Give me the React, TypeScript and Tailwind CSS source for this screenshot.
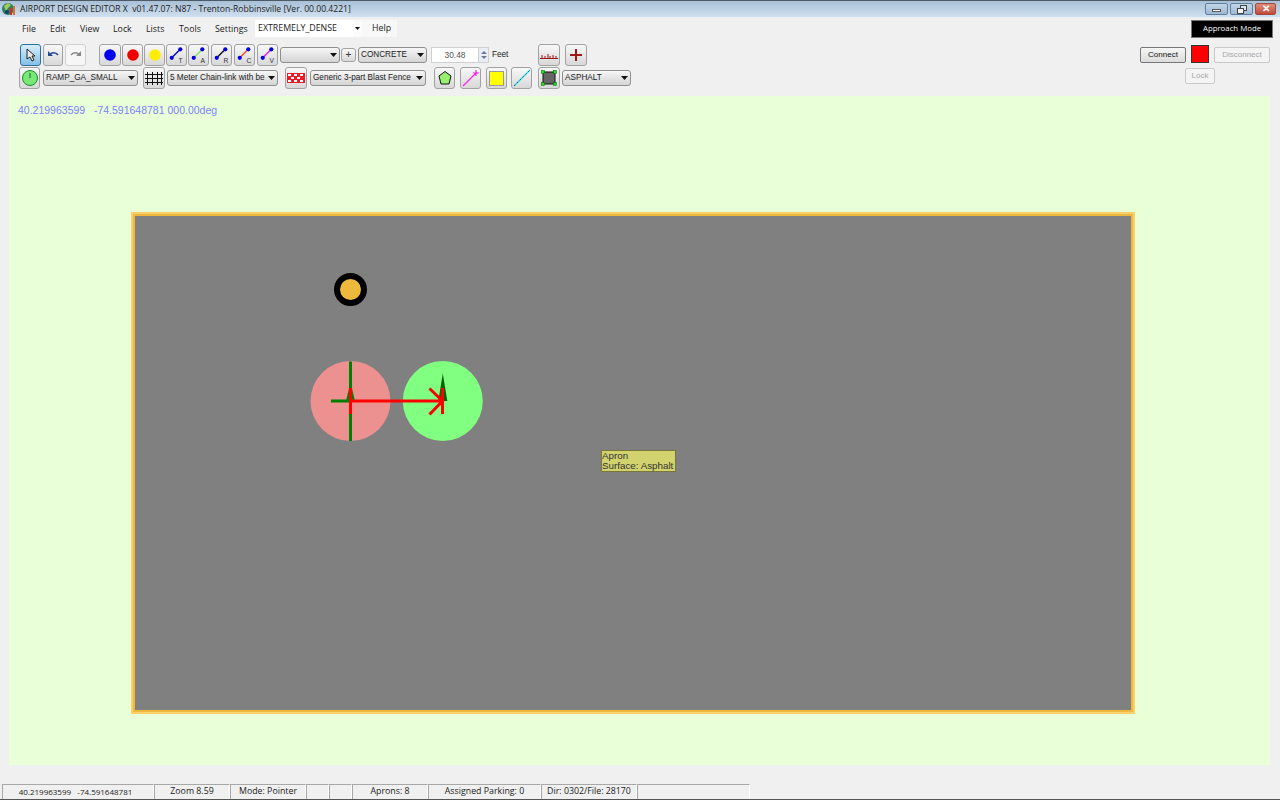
import type { ReactNode } from 'react';

// Shared chrome for the little toolbar buttons
const btn = 'flex shrink-0 items-center justify-center rounded-[3px] border';
const btnNormal = 'border-[#a2a2a2] bg-linear-to-b from-[#f8f8f8] to-[#d8d8d8]';

function ToolButton({
  className,
  tone = btnNormal,
  children,
}: {
  className: string;
  tone?: string;
  children: ReactNode;
}) {
  return <div className={`${btn} ${tone} ${className}`}>{children}</div>;
}

function Combo({ className, label }: { className: string; label?: string }) {
  return (
    <div
      className={`flex shrink-0 items-center justify-between rounded-[3px] border border-[#8f8f8f] bg-linear-to-b from-[#f6f6f6] to-[#d4d4d4] pl-[2px] pr-[2px] text-[8.2px] text-[#222] ${className}`}
    >
      <span className="whitespace-nowrap">{label}</span>
      <svg width="7" height="4" viewBox="0 0 7 4" className="shrink-0">
        <path d="M0 0h7L3.5 4z" fill="#111" />
      </svg>
    </div>
  );
}

function Dot({ color }: { color: string }) {
  return (
    <svg width="16" height="16" viewBox="0 0 16 16">
      <circle cx="8" cy="8" r="5.8" fill={color} />
    </svg>
  );
}

function LineTool({ color, letter }: { color: string; letter: string }) {
  return (
    <svg width="20" height="20" viewBox="0 0 20 20">
      <line x1="5" y1="13" x2="14" y2="4" stroke={color} strokeWidth="1.5" />
      <circle cx="5" cy="13" r="2.2" fill="#0000e0" />
      <circle cx="14" cy="4" r="2.2" fill="#0000e0" />
      <text x="12" y="18" fontSize="7" fill="#333" fontFamily="Liberation Sans, sans-serif">
        {letter}
      </text>
    </svg>
  );
}

const lineTools = [
  { letter: 'T', color: '#0000e0', className: 'ml-[1px]' },
  { letter: 'A', color: '#80e060', className: 'ml-[1px]' },
  { letter: 'R', color: '#111111', className: 'ml-[2px]' },
  { letter: 'C', color: '#f05020', className: 'ml-[2px]' },
  { letter: 'V', color: '#e020e0', className: 'ml-[2px]' },
];

const menuItems = [
  { label: 'File', className: 'w-[28px]' },
  { label: 'Edit', className: 'w-[30px]' },
  { label: 'View', className: 'w-[33px]' },
  { label: 'Lock', className: 'w-[33px]' },
  { label: 'Lists', className: 'w-[33px]' },
  { label: 'Tools', className: 'w-[36px]' },
  { label: 'Settings', className: 'w-[40px]' },
];

const statusPanels = [
  { label: '40.219963599   -74.591648781', className: 'w-[152px] pr-[5px] text-[8px]' },
  { label: 'Zoom 8.59', className: 'w-[76px] text-[8.8px]' },
  { label: 'Mode: Pointer', className: 'w-[76px] text-[8.8px]' },
  { label: '', className: 'w-[23px]' },
  { label: '', className: 'w-[23px]' },
  { label: 'Aprons: 8', className: 'w-[76px] text-[8.8px]' },
  { label: 'Assigned Parking: 0', className: 'w-[113px] text-[8.8px]' },
  { label: 'Dir: 0302/File: 28170', className: 'w-[96px] text-[8.8px]' },
  { label: '', className: 'w-[113px]' },
];

function WindowButton({ className, children }: { className: string; children: ReactNode }) {
  return (
    <div className={`flex h-[12px] items-center justify-center rounded-[2px] border ${className}`}>
      {children}
    </div>
  );
}

export default function App() {
  return (
    <div className="flex h-[800px] w-[1280px] flex-col overflow-hidden bg-[#f0f0f0] font-['Liberation_Sans',sans-serif]">
      {/* Title bar */}
      <div className="flex h-[17px] shrink-0 items-center border-t border-[#4c5a66] bg-linear-to-b from-[#a9c0d6] to-[#cfe0f0]">
        <svg width="16" height="16" viewBox="0 0 16 16" className="ml-[1px] shrink-0">
          <circle cx="7" cy="8" r="6" fill="#2f7f6a" />
          <path d="M3 5l4-3 3 2-3 3-2 3z" fill="#9fd05a" />
          <rect x="9" y="7" width="2" height="7" fill="#d83020" />
          <rect x="12" y="5" width="2" height="9" fill="#e07020" />
          <circle cx="6" cy="11" r="2" fill="#1a3f66" />
        </svg>
        <span className="ml-[3px] whitespace-pre font-['Open_Sans',sans-serif] text-[8.6px] text-[#222]">
          AIRPORT DESIGN EDITOR X  v01.47.07: N87 - Trenton-Robbinsville [Ver. 00.00.4221]
        </span>
        <div className="ml-auto mr-[4px] flex gap-[2px]">
          <WindowButton className="w-[23px] border-[#5f7f9f] bg-linear-to-b from-[#c4d6e8] to-[#9fb8d0]">
            <div className="mt-[2px] h-[3px] w-[9px] border border-[#555] bg-white" />
          </WindowButton>
          <WindowButton className="w-[23px] border-[#5f7f9f] bg-linear-to-b from-[#c4d6e8] to-[#9fb8d0]">
            <svg width="10" height="9" viewBox="0 0 10 9">
              <rect x="3.5" y="0.5" width="6" height="5" fill="#d8e4f0" stroke="#444" />
              <rect x="0.5" y="3.5" width="6" height="5" fill="#eef4fa" stroke="#444" />
            </svg>
          </WindowButton>
          <WindowButton className="w-[21px] border-[#a04a3a] bg-linear-to-b from-[#e08d7c] to-[#c0493a]">
            <span className="text-[10px] font-bold leading-none text-white">✕</span>
          </WindowButton>
        </div>
      </div>

      {/* Menu strip */}
      <div className="flex h-[23px] shrink-0 items-start pl-[22px] font-['Open_Sans',sans-serif] text-[8.8px] text-[#1a1a1a]">
        {menuItems.map((item) => (
          <span key={item.label} className={`mt-[6px] ${item.className}`}>
            {item.label}
          </span>
        ))}
        <div className="mt-[3px] flex h-[17px] w-[107px] items-center bg-[#fbfbfb]">
          <div className="flex h-full w-[98px] items-center bg-white pl-[3px]">EXTREMELY_DENSE</div>
          <svg width="5" height="3" viewBox="0 0 5 3" className="ml-[2px]">
            <path d="M0 0h5L2.5 3z" fill="#111" />
          </svg>
        </div>
        <div className="mt-[3px] flex h-[17px] w-[35px] items-center bg-[#f8f8f8] pl-[10px]">Help</div>
        <div className="ml-auto mr-[7px] mt-[3px] flex h-[18px] w-[82px] items-center justify-center border border-[#777] bg-black text-[7.8px] text-white">
          Approach Mode
        </div>
      </div>

      {/* Toolbars */}
      <div className="mt-[4px] flex h-[46px] shrink-0 items-start">
        <div className="flex w-[640px] flex-col">
          <div className="flex h-[23px] items-start pl-[20px]">
            <ToolButton
              className="h-[22px] w-[21px]"
              tone="border-[#2c6f9f] bg-linear-to-b from-[#d8eefc] to-[#84bfe6]"
            >
              <svg width="12" height="14" viewBox="0 0 12 14">
                <path d="M2 1v10l3-2 2 4 2-1-2-4h3z" fill="#e8e8e8" stroke="#222" />
              </svg>
            </ToolButton>
            <ToolButton className="ml-[2px] h-[22px] w-[20px]">
              <svg width="12" height="10" viewBox="0 0 12 10" fill="none">
                <path d="M3 5c1-3 6-3 8 0" stroke="#2a4a9a" strokeWidth="1.6" />
                <path d="M1 1v5h5z" fill="#2a4a9a" />
              </svg>
            </ToolButton>
            <ToolButton className="ml-[2px] h-[22px] w-[21px]" tone="border-[#d0d0d0] bg-[#f6f6f6]">
              <svg width="12" height="10" viewBox="0 0 12 10" fill="none">
                <path d="M9 5c-1-3-6-3-8 0" stroke="#888" strokeWidth="1.4" />
                <path d="M11 1v5h-5z" fill="#888" />
              </svg>
            </ToolButton>
            <ToolButton className="ml-[13px] h-[22px] w-[22px]">
              <Dot color="#0000f0" />
            </ToolButton>
            <ToolButton className="ml-[1px] h-[22px] w-[21px]">
              <Dot color="#f00000" />
            </ToolButton>
            <ToolButton className="ml-[1px] h-[22px] w-[21px]">
              <Dot color="#ffee00" />
            </ToolButton>
            {lineTools.map((tool) => (
              <ToolButton key={tool.letter} className={`h-[22px] w-[21px] ${tool.className}`}>
                <LineTool color={tool.color} letter={tool.letter} />
              </ToolButton>
            ))}
            <Combo className="ml-[2px] mt-[3px] h-[16px] w-[60px]" />
            <ToolButton className="ml-[1px] mt-[4px] h-[14px] w-[15px] text-[10px] leading-none text-[#333]">
              +
            </ToolButton>
            <Combo className="ml-[2px] mt-[3px] h-[16px] w-[69px]" label="CONCRETE" />
            <div className="ml-[4px] mt-[3px] flex h-[16px] w-[58px] items-center border border-[#d0d0d0] bg-white text-[8.4px] text-[#555]">
              <span className="w-[46px] text-center">30.48</span>
              <div className="flex h-full w-[10px] flex-col items-center justify-center gap-[2px] border-l border-[#ccc] bg-[#e8eef4]">
                <svg width="6" height="3" viewBox="0 0 6 3">
                  <path d="M0 3h6L3 0z" fill="#6a7a9a" />
                </svg>
                <svg width="6" height="3" viewBox="0 0 6 3">
                  <path d="M0 0h6L3 3z" fill="#6a7a9a" />
                </svg>
              </div>
            </div>
            <span className="ml-[3px] mt-[5px] w-[16px] text-[8.2px] text-[#222]">Feet</span>
            <ToolButton className="ml-[30px] h-[22px] w-[22px]">
              <svg width="18" height="10" viewBox="0 0 18 10" stroke="#a01818" strokeWidth="1" fill="none">
                <path d="M0 8.5h18M2 8V5M5 8V6M8 8V4M10 8V6M13 8V5M16 8V6" />
              </svg>
            </ToolButton>
            <ToolButton className="ml-[5px] h-[22px] w-[22px]">
              <svg width="14" height="14" viewBox="0 0 14 14" stroke="#a01818" strokeWidth="2">
                <path d="M7 1v12M1 7h12" />
              </svg>
            </ToolButton>
          </div>

          <div className="flex h-[23px] items-start pl-[19px]">
            <ToolButton className="h-[22px] w-[21px]">
              <svg width="18" height="18" viewBox="0 0 18 18">
                <circle cx="9" cy="9" r="7.5" fill="#78e878" stroke="#1e8a2a" />
                <path d="M9 4v5" stroke="#116622" strokeWidth="1" />
              </svg>
            </ToolButton>
            <Combo className="ml-[3px] mt-[3px] h-[16px] w-[95px]" label="RAMP_GA_SMALL" />
            <ToolButton className="ml-[5px] h-[22px] w-[22px]">
              <svg width="18" height="13" viewBox="0 0 18 13" stroke="#111" strokeWidth="1" fill="none">
                <path d="M0 2.5h18M0 6.5h18M0 10.5h18M2.5 0v13M7.5 0v13M12.5 0v13M16.5 0v13" />
              </svg>
            </ToolButton>
            <Combo className="ml-[2px] mt-[3px] h-[16px] w-[111px]" label="5 Meter Chain-link with be" />
            <ToolButton className="ml-[7px] h-[22px] w-[22px]">
              <svg width="18" height="10" viewBox="0 0 18 10">
                <rect width="18" height="10" fill="#ee1c24" />
                <path d="M1 1h3v2H1zM7 1h3v2H7zM13 1h3v2h-3zM4 4h3v2H4zM10 4h3v2h-3zM1 7h3v2H1zM7 7h3v2H7zM13 7h3v2h-3z" fill="#fff" />
              </svg>
            </ToolButton>
            <Combo className="ml-[3px] mt-[3px] h-[16px] w-[116px]" label="Generic 3-part Blast Fence" />
            <ToolButton className="ml-[8px] h-[22px] w-[21px]">
              <svg width="16" height="16" viewBox="0 0 16 16">
                <path d="M8 1.5l6 4.5-2 8H4L2 6z" fill="#98f070" stroke="#111" />
              </svg>
            </ToolButton>
            <ToolButton className="ml-[5px] h-[22px] w-[21px]">
              <svg width="18" height="18" viewBox="0 0 18 18" stroke="#ff20e0" strokeWidth="1.2" fill="none">
                <path d="M1 17L15 3M11 4h6M14 1v6" />
              </svg>
            </ToolButton>
            <ToolButton className="ml-[5px] h-[22px] w-[21px]">
              <div className="h-[15px] w-[15px] border border-[#9a9a9a] bg-[#ffff00]" />
            </ToolButton>
            <ToolButton className="ml-[4px] h-[22px] w-[21px]">
              <svg width="18" height="18" viewBox="0 0 18 18" fill="none">
                <path d="M1 17L17 1" stroke="#20e0f0" strokeWidth="1.2" />
                <path d="M1 17L17 1" stroke="#223" strokeWidth="0.6" strokeDasharray="2 2" />
              </svg>
            </ToolButton>
            <ToolButton className="ml-[6px] h-[22px] w-[22px]">
              <svg width="18" height="18" viewBox="0 0 18 18">
                <rect x="3" y="3" width="12" height="12" fill="#666" stroke="#111" />
                <g fill="#20e020" stroke="#0a5a0a" strokeWidth="0.5">
                  <rect x="1.5" y="1.5" width="3" height="3" />
                  <rect x="13.5" y="1.5" width="3" height="3" />
                  <rect x="1.5" y="13.5" width="3" height="3" />
                  <rect x="13.5" y="13.5" width="3" height="3" />
                </g>
              </svg>
            </ToolButton>
            <Combo className="ml-[2px] mt-[3px] h-[16px] w-[69px]" label="ASPHALT" />
          </div>
        </div>

        {/* Connection controls */}
        <div className="ml-auto mr-[10px] flex flex-col items-end">
          <div className="flex items-center">
            <div className="mt-[2px] flex h-[16px] w-[46px] items-center justify-center rounded-[2px] border border-[#777] bg-linear-to-b from-[#f6f6f6] to-[#dcdcdc] text-[8px] text-[#111]">
              Connect
            </div>
            <div className="ml-[5px] mt-[1px] h-[18px] w-[18px] border border-[#333] bg-[#ff0000]" />
            <div className="ml-[5px] mt-[2px] flex h-[16px] w-[56px] items-center justify-center rounded-[2px] border border-[#c8c8c8] bg-[#f4f4f4] text-[8px] text-[#a8a8a8]">
              Disconnect
            </div>
          </div>
          <div className="mr-[55px] mt-[5px] flex h-[16px] w-[30px] items-center justify-center rounded-[2px] border border-[#c8c8c8] bg-[#f4f4f4] text-[8px] text-[#a8a8a8]">
            Lock
          </div>
        </div>
      </div>

      {/* Map canvas */}
      <div className="relative ml-[9px] mt-[6px] h-[669px] w-[1261px] shrink-0 bg-[#e8ffd8]">
        <span className="absolute left-[9px] top-[7px] whitespace-pre text-[10.5px] text-[#7f7fff]">
          40.219963599   -74.591648781 000.00deg
        </span>

        {/* Apron polygon */}
        <div className="absolute left-[122px] top-[116px] h-[502px] w-[1004px] border-[2px] border-[#fbd06a]">
          <div className="h-full w-full border-[2px] border-[#eeb83c] bg-[#808080]" />
        </div>

        {/* Parking markers, coordinates are page pixels less the canvas origin */}
        <svg width="1261" height="669" viewBox="9 96 1261 669" className="absolute left-0 top-0">
          <circle cx="350.5" cy="289.5" r="13.5" fill="#edb93c" stroke="#000" strokeWidth="6" />
          <circle cx="350.5" cy="401" r="40" fill="#ec9090" />
          <circle cx="442.8" cy="401" r="40" fill="#80ff80" />
          <path d="M350.5 361.5V441M331 401h19" stroke="#008000" strokeWidth="3" fill="none" />
          <path d="M350.5 382l-4.5 19h9z" fill="#008000" />
          <path d="M442.8 373.5l-4.5 27.5h9z" fill="#006400" />
          <path
            d="M350.5 388v26M350.5 401h92M442.5 388v26M429.5 388.5l13 12.5l-13 13.5"
            stroke="#ff0000"
            strokeWidth="3"
            fill="none"
          />
        </svg>

        {/* Hover tooltip */}
        <div className="absolute left-[592px] top-[354px] h-[22px] w-[75px] border border-[#77773a] bg-[#d2d26e] text-[9.8px] leading-[10px] text-[#333]">
          <div>Apron</div>
          <div className="whitespace-nowrap">Surface: Asphalt</div>
        </div>
      </div>

      {/* Status bar */}
      <div className="mt-[19px] flex h-[16px] shrink-0 items-stretch border-b border-b-[#555] pl-[2px]">
        {statusPanels.map((panel, i) => (
          <div
            key={i}
            className={`flex items-center justify-center whitespace-pre border-l border-t border-r border-[#a8a8a8] border-r-white font-['Open_Sans',sans-serif] text-[#222] ${panel.className}`}
          >
            {panel.label}
          </div>
        ))}
      </div>
    </div>
  );
}
